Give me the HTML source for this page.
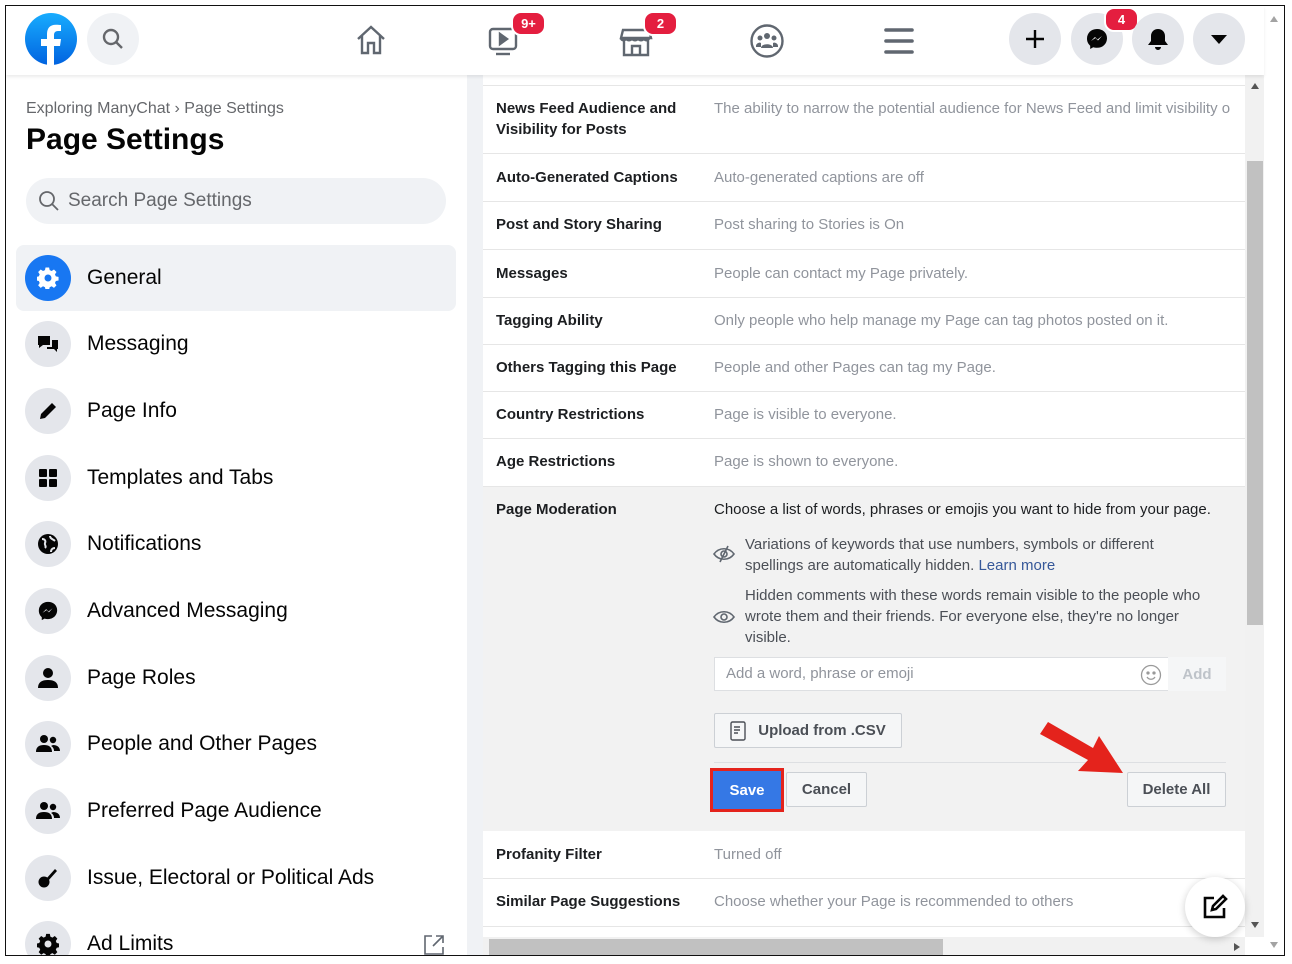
<!DOCTYPE html>
<html><head><meta charset="utf-8"><style>
*{box-sizing:border-box;margin:0;padding:0}
body{width:1292px;height:964px;background:#fff;font-family:"Liberation Sans",Arial,sans-serif;position:relative;overflow:hidden}
.frame{position:absolute;left:5px;top:5px;width:1280px;height:951px;border:1.5px solid #111;overflow:hidden;background:#fff}
.hdr{position:absolute;left:0;top:0;width:1258px;height:69px;background:#fff;box-shadow:0 2px 3px rgba(0,0,0,.08);z-index:3}
.circ{position:absolute;width:52px;height:52px;border-radius:50%;background:#e4e6eb;display:flex;align-items:center;justify-content:center}
.badge{position:absolute;background:#e41e3f;color:#fff;font-size:13px;font-weight:bold;border-radius:10px;height:21px;min-width:21px;padding:0 5px;line-height:21px;text-align:center;border:2px solid #fff;box-sizing:content-box}
.side{position:absolute;left:0;top:69px;width:461px;height:882px;background:#fff}
.sep{position:absolute;left:461px;top:69px;width:16px;height:882px;background:#f0f2f5}
.item{position:absolute;left:10px;width:440px;height:66px;display:flex;align-items:center;font-size:21px;color:#050505}
.item .ic{width:46px;height:46px;border-radius:50%;background:#e4e6eb;margin-left:9px;margin-right:16px;display:flex;align-items:center;justify-content:center}
.content{position:absolute;left:477px;top:69px;width:762px;height:862px;background:#fff}
.row{position:absolute;left:0;width:762px;border-bottom:1px solid #e6e6e6;font-size:15px}
.row .k{position:absolute;left:13px;font-weight:bold;color:#1c1e21;width:200px;line-height:21px}
.row .v{position:absolute;left:231px;color:#90949c;white-space:nowrap;line-height:21px}
.vs{position:absolute;left:1239px;top:69px;width:19px;height:862px;background:#f1f1f1}
.btn{position:absolute;border:1px solid #ccd0d5;background:#f5f6f7;font-size:15px;font-weight:bold;color:#4b4f56;display:flex;align-items:center;justify-content:center;border-radius:2px}
</style></head><body>
<div class="frame">
<div class="hdr">
 <svg style="position:absolute;left:19px;top:7px" width="52" height="52" viewBox="0 0 52 52"><defs><linearGradient id="g" x1="0" y1="0" x2="0" y2="1"><stop offset="0" stop-color="#18acfe"/><stop offset="1" stop-color="#0163e0"/></linearGradient></defs><circle cx="26" cy="26" r="26" fill="url(#g)"/><path d="M29 52V33h6l1-7h-7v-4c0-2 1-4 4-4h3v-6c-1 0-3-.3-5-.3-6 0-9 3.3-9 9.3v5h-6v7h6v19z" fill="#fff"/></svg>
 <div class="circ" style="left:81px;top:7px;background:#f0f2f5"><svg width="24" height="24" viewBox="0 0 24 24" fill="none" stroke="#65676b" stroke-width="2.4"><circle cx="10" cy="10" r="7"/><path d="M15 15l6 6"/></svg></div>
 <svg style="position:absolute;left:348px;top:17px" width="34" height="34" viewBox="0 0 34 34" fill="none" stroke="#606770" stroke-width="2.4"><path d="M4 16L17 4l13 12M8 13v17h6V20h6v10h6V13"/></svg>
 <svg style="position:absolute;left:481px;top:18px" width="34" height="34" viewBox="0 0 34 34" fill="none" stroke="#606770" stroke-width="2.4"><rect x="3" y="5" width="26" height="20" rx="3"/><path d="M13 10l7 5-7 5z" fill="#606770"/><path d="M9 30h14"/></svg>
 <div class="badge" style="left:505px;top:5px">9+</div>
 <svg style="position:absolute;left:613px;top:19px" width="34" height="34" viewBox="0 0 34 34" fill="none" stroke="#606770" stroke-width="2.4"><path d="M4 5h26l2 8H2zM5 13v17h24V13M13 30v-9h8v9M2 13c0 3 5 3 5 0 0 3 6 3 6 0 0 3 6 3 6 0 0 3 6 3 6 0 0 3 5 3 5 0"/></svg>
 <div class="badge" style="left:637px;top:5px">2</div>
 <svg style="position:absolute;left:743px;top:17px" width="36" height="36" viewBox="0 0 36 36"><circle cx="18" cy="18" r="15.5" fill="none" stroke="#606770" stroke-width="2.4"/><circle cx="18" cy="13" r="3" fill="#606770"/><circle cx="11" cy="15" r="2.5" fill="#606770"/><circle cx="25" cy="15" r="2.5" fill="#606770"/><path d="M12 25c0-5 12-5 12 0zM7 23c0-3 4-4 5-3v4H7zM29 23c0-3-4-4-5-3v4h5z" fill="#606770"/></svg>
 <svg style="position:absolute;left:877px;top:19px" width="32" height="32" viewBox="0 0 32 32" stroke="#606770" stroke-width="3.6" stroke-linecap="round"><path d="M3 5h26M3 16h26M3 27h26"/></svg>
 <div class="circ" style="left:1003px;top:7px"><svg width="22" height="22" viewBox="0 0 22 22" stroke="#050505" stroke-width="2.4"><path d="M11 2v18M2 11h18"/></svg></div>
 <div class="circ" style="left:1065px;top:7px"><svg width="24" height="24" viewBox="0 0 24 24"><path d="M12 2C6 2 2 6.3 2 11.6c0 2.9 1.2 5.4 3.2 7.1V22l3-1.7c1.2.3 2.4.5 3.8.5 6 0 10-4.3 10-9.6S18 2 12 2z" fill="#050505"/><path d="M6 14l4-4 2.5 2.5L17 9l-4 4.5-2.5-2.5z" fill="#fff"/></svg></div>
 <div class="badge" style="left:1098px;top:1px">4</div>
 <div class="circ" style="left:1126px;top:7px"><svg width="22" height="24" viewBox="0 0 22 24" fill="#050505"><path d="M11 2c-4 0-7 3-7 7v5l-3 4h20l-3-4V9c0-4-3-7-7-7zM8 20a3 3 0 0 0 6 0z"/></svg></div>
 <div class="circ" style="left:1187px;top:7px"><svg width="18" height="12" viewBox="0 0 18 12"><path d="M1 2h16l-8 9z" fill="#050505"/></svg></div>
</div>
<div style="position:absolute;left:1258px;top:0;width:20px;height:951px;background:#fff"><svg style="position:absolute;left:6px;top:10px" width="8" height="6"><path d="M0 6L4 0l4 6z" fill="#a3a3a3"/></svg><svg style="position:absolute;left:6px;top:936px" width="8" height="6"><path d="M0 0h8L4 6z" fill="#a3a3a3"/></svg></div>

<div class="side">
 <div style="position:absolute;left:20px;top:25px;font-size:16px;color:#65676b">Exploring ManyChat › Page Settings</div>
 <div style="position:absolute;left:20px;top:48px;font-size:30px;font-weight:bold;color:#050505">Page Settings</div>
 <div style="position:absolute;left:20px;top:103px;width:420px;height:46px;border-radius:23px;background:#f0f2f5;font-size:19px;color:#65676b;display:flex;align-items:center"><svg style="margin:0 8px 0 12px" width="22" height="22" viewBox="0 0 22 22" fill="none" stroke="#65676b" stroke-width="1.8"><circle cx="9" cy="9" r="7"/><path d="M14 14l6 6"/></svg>Search Page Settings</div>
 <div class="item" style="top:170px;background:#f0f2f5;border-radius:8px"><div class="ic" style="background:#1877f2"><svg width="22" height="22" viewBox="0 0 24 24"><path fill="#fff" d="M10 1h4l.6 3 2.2 1 2.6-1.7 2.8 2.8L20.5 8.7l1 2.2 3 .6v4l-3 .6-1 2.2 1.7 2.6-2.8 2.8-2.6-1.7-2.2 1-.6 3h-4l-.6-3-2.2-1-2.6 1.7-2.8-2.8 1.7-2.6-1-2.2-3-.6v-4l3-.6 1-2.2L1.8 6.1 4.6 3.3 7.2 5l2.2-1z" transform="translate(-.5 -.5) scale(.98)"/><circle cx="12" cy="12" r="3.8" fill="#1877f2"/></svg></div>General</div>
 <div class="item" style="top:236px"><div class="ic"><svg width="22" height="20" viewBox="0 0 22 20" fill="#050505"><path d="M1 2h12v9H6l-4 3V11H1z"/><path d="M15 6h6v9h-1v3l-3-3h-7v-2h5z"/></svg></div>Messaging</div>
 <div class="item" style="top:303px"><div class="ic"><svg width="20" height="20" viewBox="0 0 20 20" fill="#050505"><path d="M2 18l1-5L14 2l4 4L7 17z"/></svg></div>Page Info</div>
 <div class="item" style="top:370px"><div class="ic"><svg width="20" height="20" viewBox="0 0 20 20" fill="#050505"><rect x="1" y="1" width="8" height="8" rx="1"/><rect x="11" y="1" width="8" height="8" rx="1"/><rect x="1" y="11" width="8" height="8" rx="1"/><rect x="11" y="11" width="8" height="8" rx="1"/></svg></div>Templates and Tabs</div>
 <div class="item" style="top:436px"><div class="ic"><svg width="22" height="22" viewBox="0 0 22 22"><circle cx="11" cy="11" r="10" fill="#050505"/><path d="M5 6c3 0 4 2 3 4s2 3 0 5M13 3c0 3 3 3 5 5M14 19c0-3 2-4 4-4" stroke="#e4e6eb" stroke-width="2" fill="none"/></svg></div>Notifications</div>
 <div class="item" style="top:503px"><div class="ic"><svg width="22" height="22" viewBox="0 0 24 24"><path d="M12 2C6 2 2 6.3 2 11.6c0 2.9 1.2 5.4 3.2 7.1V22l3-1.7c1.2.3 2.4.5 3.8.5 6 0 10-4.3 10-9.6S18 2 12 2z" fill="#050505"/><path d="M6 14l4-4 2.5 2.5L17 9l-4 4.5-2.5-2.5z" fill="#e4e6eb"/></svg></div>Advanced Messaging</div>
 <div class="item" style="top:570px"><div class="ic"><svg width="20" height="22" viewBox="0 0 20 22" fill="#050505"><circle cx="10" cy="6" r="5"/><path d="M0 21c0-6 4-8 10-8s10 2 10 8z"/></svg></div>Page Roles</div>
 <div class="item" style="top:636px"><div class="ic"><svg width="24" height="20" viewBox="0 0 24 20" fill="#050505"><circle cx="8" cy="5" r="4"/><circle cx="17" cy="6" r="3.2"/><path d="M0 18c0-5 3-7 8-7s8 2 8 7zM17 11c4 0 7 2 7 6h-6c0-2-1-4-3-5z"/></svg></div>People and Other Pages</div>
 <div class="item" style="top:703px"><div class="ic"><svg width="24" height="20" viewBox="0 0 24 20" fill="#050505"><circle cx="8" cy="5" r="4"/><circle cx="17" cy="6" r="3.2"/><path d="M0 18c0-5 3-7 8-7s8 2 8 7zM17 11c4 0 7 2 7 6h-6c0-2-1-4-3-5z"/></svg></div>Preferred Page Audience</div>
 <div class="item" style="top:770px"><div class="ic"><svg width="22" height="22" viewBox="0 0 22 22" fill="#050505"><circle cx="7" cy="15" r="5.5"/><path d="M9 12L18 2l2 2-9 10z"/></svg></div>Issue, Electoral or Political Ads</div>
 <div class="item" style="top:836px"><div class="ic"><svg width="22" height="22" viewBox="0 0 24 24"><path fill="#050505" d="M10 1h4l.6 3 2.2 1 2.6-1.7 2.8 2.8L20.5 8.7l1 2.2 3 .6v4l-3 .6-1 2.2 1.7 2.6-2.8 2.8-2.6-1.7-2.2 1-.6 3h-4l-.6-3-2.2-1-2.6 1.7-2.8-2.8 1.7-2.6-1-2.2-3-.6v-4l3-.6 1-2.2L1.8 6.1 4.6 3.3 7.2 5l2.2-1z"/><circle cx="12" cy="12" r="3.8" fill="#e4e6eb"/></svg></div>Ad Limits</div>
 <svg style="position:absolute;left:416px;top:858px" width="24" height="24" viewBox="0 0 24 24" fill="none" stroke="#606770" stroke-width="1.6"><path d="M10 3H3v18h18v-7M14 3h7v7M21 3L11 13"/></svg>
</div>
<div class="sep"></div>

<div class="content">
 <div class="row" style="top:0;height:11px"></div>
 <div class="row" style="top:11px;height:68px"><div class="k" style="top:12px">News Feed Audience and Visibility for Posts</div><div class="v" style="top:12px">The ability to narrow the potential audience for News Feed and limit visibility o</div></div>
 <div class="row" style="top:79px;height:48px"><div class="k" style="top:13px">Auto-Generated Captions</div><div class="v" style="top:13px">Auto-generated captions are off</div></div>
 <div class="row" style="top:127px;height:48px"><div class="k" style="top:12px">Post and Story Sharing</div><div class="v" style="top:12px">Post sharing to Stories is On</div></div>
 <div class="row" style="top:175px;height:48px"><div class="k" style="top:13px">Messages</div><div class="v" style="top:13px">People can contact my Page privately.</div></div>
 <div class="row" style="top:223px;height:47px"><div class="k" style="top:12px">Tagging Ability</div><div class="v" style="top:12px">Only people who help manage my Page can tag photos posted on it.</div></div>
 <div class="row" style="top:270px;height:47px"><div class="k" style="top:12px">Others Tagging this Page</div><div class="v" style="top:12px">People and other Pages can tag my Page.</div></div>
 <div class="row" style="top:317px;height:47px"><div class="k" style="top:12px">Country Restrictions</div><div class="v" style="top:12px">Page is visible to everyone.</div></div>
 <div class="row" style="top:364px;height:48px"><div class="k" style="top:12px">Age Restrictions</div><div class="v" style="top:12px">Page is shown to everyone.</div></div>
 <div class="row" style="top:412px;height:344px;background:#f2f2f2;border:none">
  <div class="k" style="top:12px">Page Moderation</div>
  <div style="position:absolute;left:231px;top:12px;color:#1c1e21;line-height:21px">Choose a list of words, phrases or emojis you want to hide from your page.</div>
  <svg style="position:absolute;left:230px;top:58px" width="22" height="18" viewBox="0 0 22 18" fill="none" stroke="#606770" stroke-width="1.6"><path d="M1 9c5-7 15-7 20 0-5 7-15 7-20 0z"/><circle cx="11" cy="9" r="3"/><path d="M15 1L7 17"/></svg>
  <div style="position:absolute;left:262px;top:47px;color:#4b4f56;line-height:21px">Variations of keywords that use numbers, symbols or different<br>spellings are automatically hidden. <span style="color:#365899">Learn more</span></div>
  <svg style="position:absolute;left:230px;top:122px" width="22" height="16" viewBox="0 0 22 16" fill="none" stroke="#606770" stroke-width="1.6"><path d="M1 8c5-7 15-7 20 0-5 7-15 7-20 0z"/><circle cx="11" cy="8" r="3"/></svg>
  <div style="position:absolute;left:262px;top:98px;color:#4b4f56;line-height:21px">Hidden comments with these words remain visible to the people who<br>wrote them and their friends. For everyone else, they're no longer<br>visible.</div>
  <div style="position:absolute;left:231px;top:170px;width:512px;height:34px;border:1px solid #dddfe2;background:#fff"><span style="position:absolute;left:11px;top:7px;color:#90949c">Add a word, phrase or emoji</span><svg style="position:absolute;left:425px;top:6px" width="22" height="22" viewBox="0 0 22 22" fill="none" stroke="#9a9a9a" stroke-width="1.3"><circle cx="11" cy="11" r="9.5"/><circle cx="8" cy="9" r="1" fill="#9a9a9a"/><circle cx="14" cy="9" r="1" fill="#9a9a9a"/><path d="M7 13c2 3 6 3 8 0"/></svg><div style="position:absolute;left:453px;top:-1px;width:58px;height:34px;background:#f5f6f7;color:#bec3c9;font-weight:bold;display:flex;align-items:center;justify-content:center">Add</div></div>
  <div class="btn" style="left:231px;top:226px;width:188px;height:35px"><svg width="16" height="20" viewBox="0 0 16 20" fill="none" stroke="#4b4f56" stroke-width="1.4" style="margin-right:12px"><rect x="1" y="1" width="14" height="18" rx="1.5"/><path d="M4 6h6M4 9h6M4 12h4"/></svg>Upload from .CSV</div>
  <div style="position:absolute;left:231px;top:275px;width:512px;height:1px;background:#dddfe2"></div>
  <div style="position:absolute;left:227px;top:281px;width:74px;height:44px;border:3px solid #e4231c"></div>
  <div style="position:absolute;left:230px;top:284px;width:68px;height:38px;background:#3578e5;color:#fff;font-weight:bold;display:flex;align-items:center;justify-content:center">Save</div>
  <div class="btn" style="left:303px;top:285px;width:81px;height:35px">Cancel</div>
  <div class="btn" style="left:644px;top:285px;width:99px;height:35px">Delete All</div>
  <svg style="position:absolute;left:553px;top:235px" width="90" height="55" viewBox="0 0 90 55"><path d="M4 12L12 0l45 26 6-12 24 37-45-2 10-11z" fill="#e4231c"/></svg>
 </div>
 <div class="row" style="top:756px;height:48px"><div class="k" style="top:13px">Profanity Filter</div><div class="v" style="top:13px">Turned off</div></div>
 <div class="row" style="top:804px;height:48px"><div class="k" style="top:12px">Similar Page Suggestions</div><div class="v" style="top:12px">Choose whether your Page is recommended to others</div></div>
</div>
<div class="vs"><svg style="position:absolute;left:6px;top:8px" width="8" height="6"><path d="M0 6L4 0l4 6z" fill="#555"/></svg><div style="position:absolute;left:2px;top:86px;width:16px;height:464px;background:#c1c1c1"></div><svg style="position:absolute;left:6px;top:847px" width="8" height="6"><path d="M0 0h8L4 6z" fill="#555"/></svg></div>
<div style="position:absolute;left:477px;top:931px;width:762px;height:20px;background:#f1f1f1"><div style="position:absolute;left:6px;top:2px;width:454px;height:16px;background:#c1c1c1"></div><svg style="position:absolute;left:751px;top:6px" width="6" height="8"><path d="M0 0l6 4-6 4z" fill="#555"/></svg></div>
<div style="position:absolute;left:1179px;top:871px;width:60px;height:60px;border-radius:50%;background:#fff;box-shadow:0 2px 8px rgba(0,0,0,.2);display:flex;align-items:center;justify-content:center"><svg width="26" height="26" viewBox="0 0 26 26" fill="none" stroke="#050505" stroke-width="2.6"><path d="M12 4H3v19h19v-9"/><path d="M10 16l1-4L21 2l3 3-10 10z"/></svg></div>
</div>
</body></html>
